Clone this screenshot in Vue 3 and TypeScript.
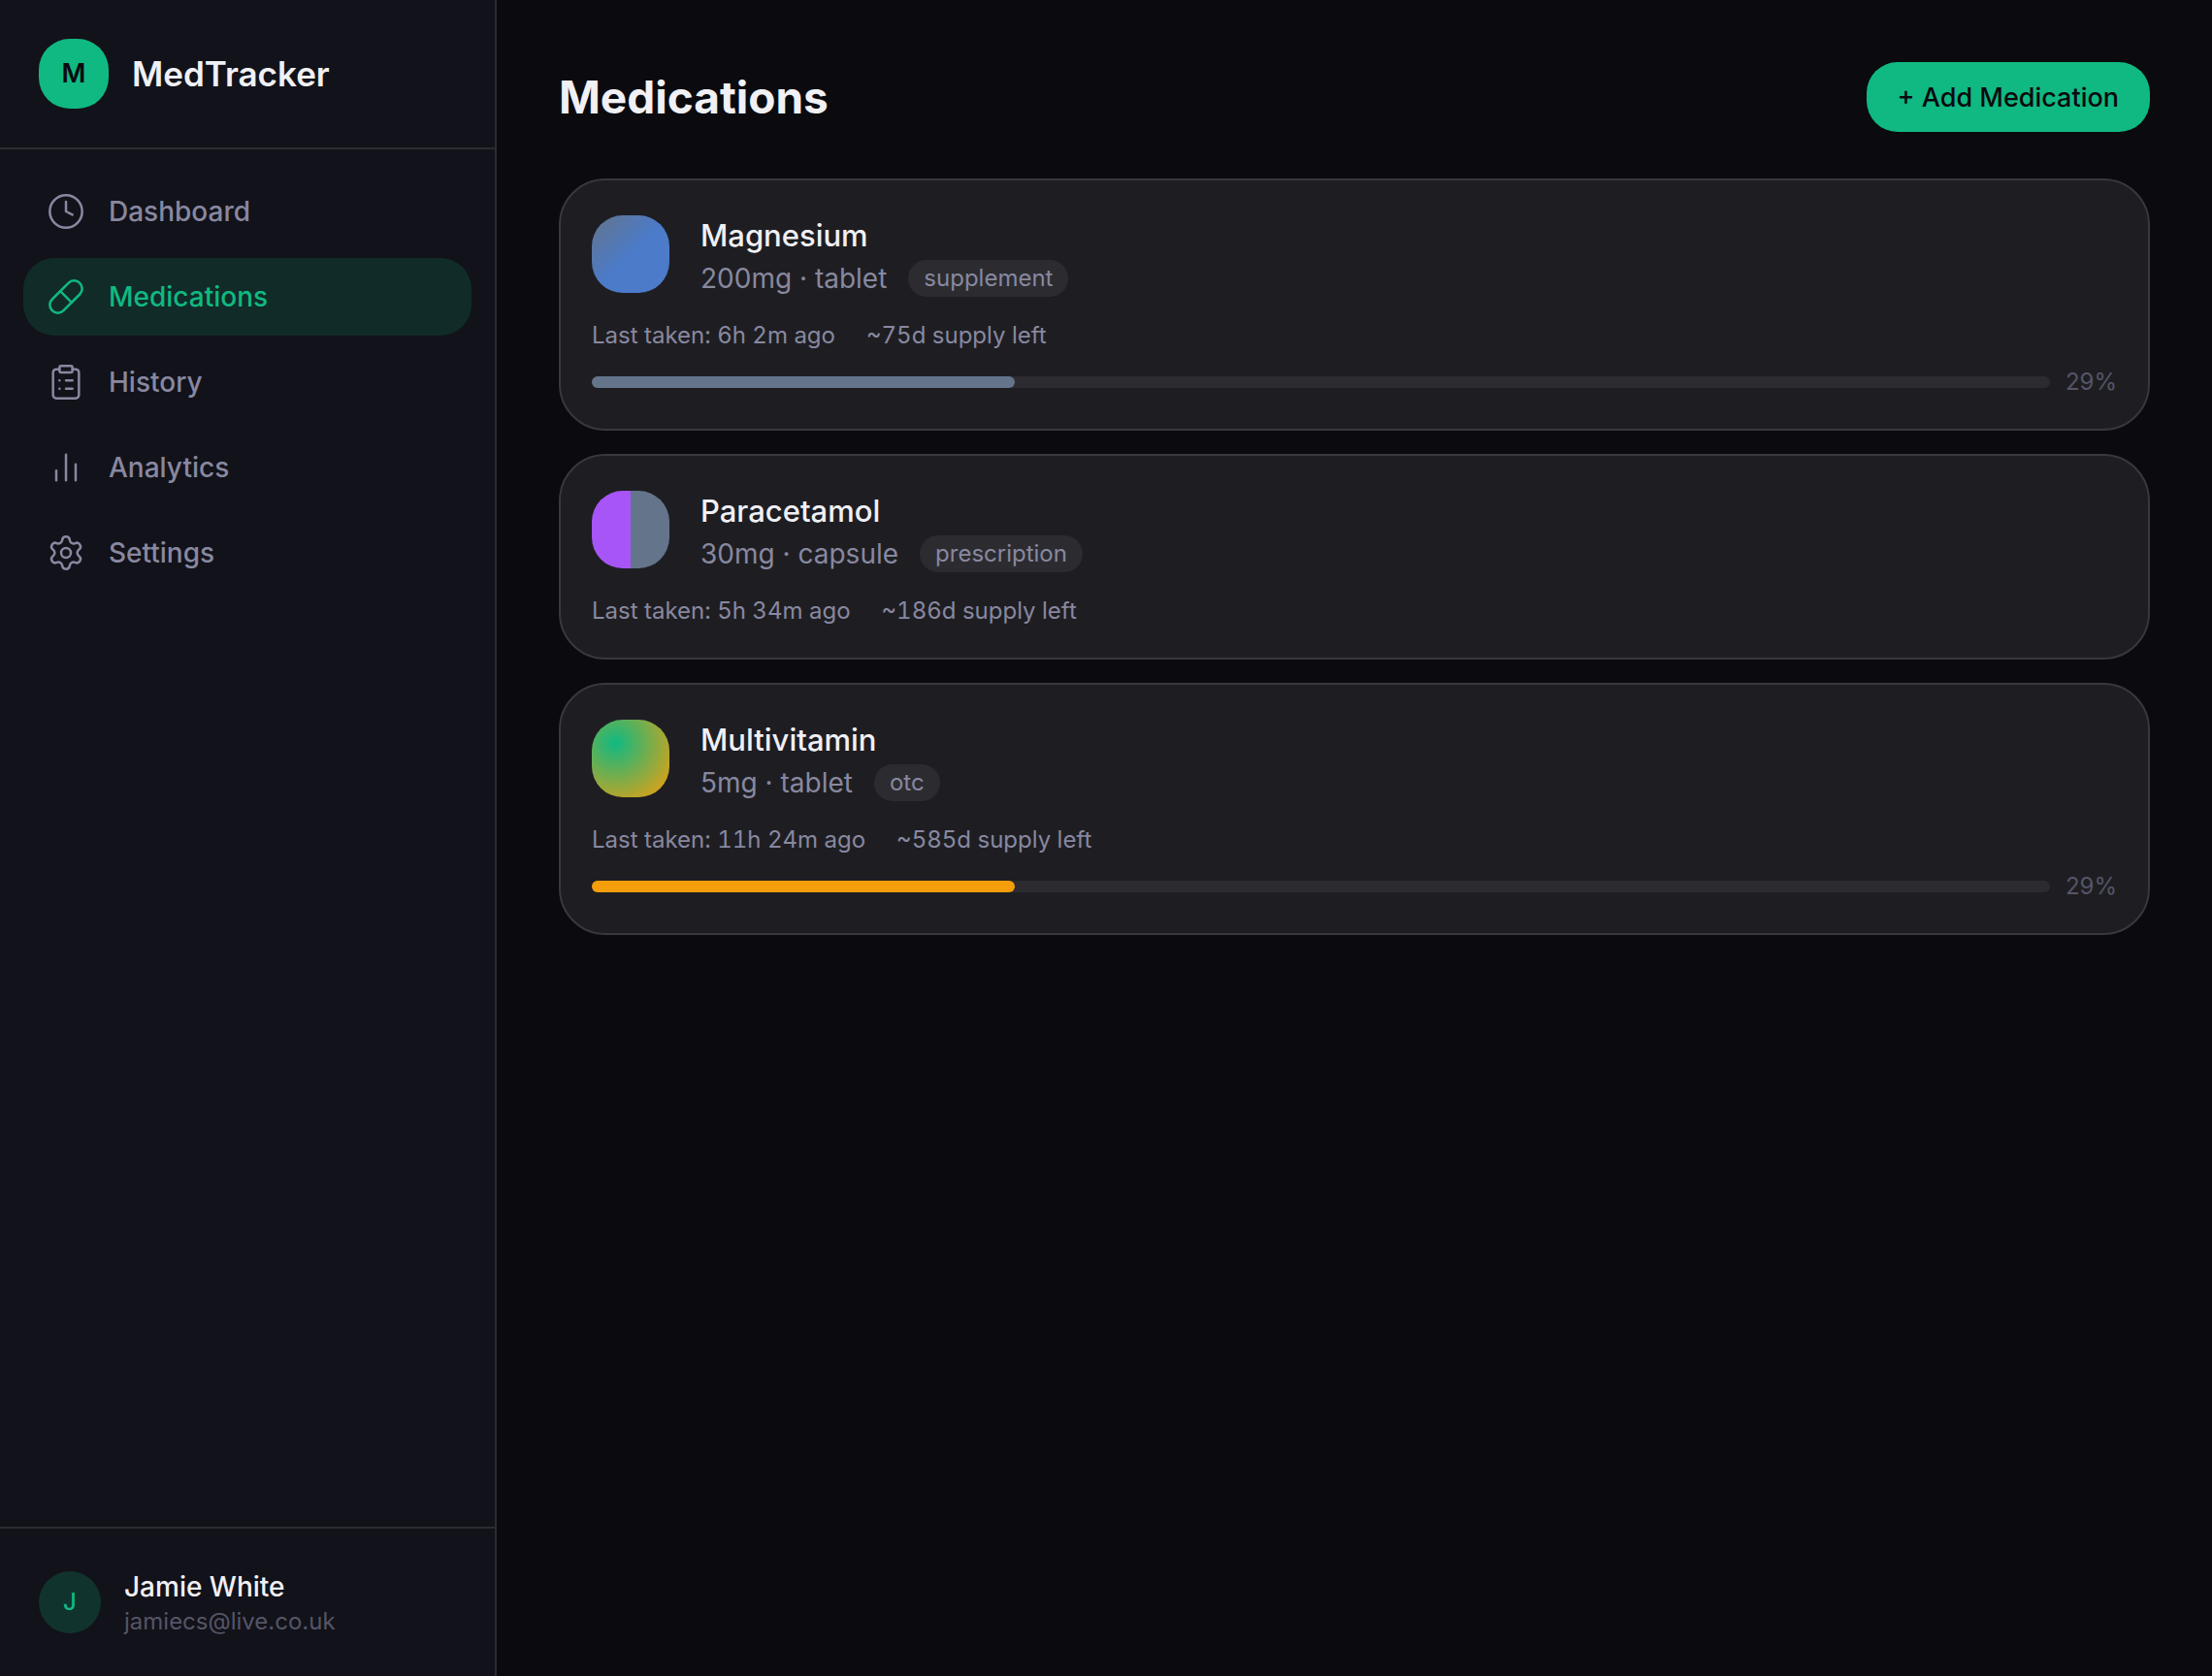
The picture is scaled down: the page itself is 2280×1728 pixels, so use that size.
<script setup lang="ts">
interface NavItem {
  label: string
  paths: string[]
  active?: boolean
}

interface Medication {
  name: string
  dose: string
  category: string
  lastTaken: string
  supply: string
  swatch: string
  progress?: number
  barColor?: string
}

const navItems: NavItem[] = [
  { label: 'Dashboard', paths: ['M12 2a10 10 0 1 0 0 20a10 10 0 1 0 0-20', 'M12 6v6l4 2'] },
  {
    label: 'Medications',
    active: true,
    paths: ['m10.5 20.5 10-10a4.95 4.95 0 1 0-7-7l-10 10a4.95 4.95 0 1 0 7 7Z', 'm8.5 8.5 7 7'],
  },
  {
    label: 'History',
    paths: [
      'M9 2h6a1 1 0 0 1 1 1v2a1 1 0 0 1-1 1H9a1 1 0 0 1-1-1V3a1 1 0 0 1 1-1Z',
      'M16 4h2a2 2 0 0 1 2 2v14a2 2 0 0 1-2 2H6a2 2 0 0 1-2-2V6a2 2 0 0 1 2-2h2',
      'M12 11h4M12 16h4M8 11h.01M8 16h.01',
    ],
  },
  { label: 'Analytics', paths: ['M18 20V10M12 20V4M6 20v-6'] },
  {
    label: 'Settings',
    paths: [
      'M9.671 4.136a2.34 2.34 0 0 1 4.659 0 2.34 2.34 0 0 0 3.319 1.915 2.34 2.34 0 0 1 2.33 4.033 2.34 2.34 0 0 0 0 3.831 2.34 2.34 0 0 1-2.33 4.033 2.34 2.34 0 0 0-3.319 1.915 2.34 2.34 0 0 1-4.659 0 2.34 2.34 0 0 0-3.32-1.915 2.34 2.34 0 0 1-2.33-4.033 2.34 2.34 0 0 0 0-3.831A2.34 2.34 0 0 1 6.35 6.051a2.34 2.34 0 0 0 3.319-1.915',
      'M12 9a3 3 0 1 0 0 6a3 3 0 1 0 0-6',
    ],
  },
]

const medications: Medication[] = [
  {
    name: 'Magnesium',
    dose: '200mg · tablet',
    category: 'supplement',
    lastTaken: 'Last taken: 6h 2m ago',
    supply: '~75d supply left',
    swatch: 'linear-gradient(135deg, #64748b, #4b7bc9 50%)',
    progress: 29,
    barColor: '#64748b',
  },
  {
    name: 'Paracetamol',
    dose: '30mg · capsule',
    category: 'prescription',
    lastTaken: 'Last taken: 5h 34m ago',
    supply: '~186d supply left',
    swatch: 'linear-gradient(90deg, #a855f7 50%, #64748b 50%)',
  },
  {
    name: 'Multivitamin',
    dose: '5mg · tablet',
    category: 'otc',
    lastTaken: 'Last taken: 11h 24m ago',
    supply: '~585d supply left',
    swatch: 'radial-gradient(circle at 30% 30%, #10b981, #f59e0b)',
    progress: 29,
    barColor: '#f59e0b',
  },
]
</script>

<template>
  <div class="app">
    <aside class="sidebar">
      <div class="brand">
        <span class="logo">M</span>
        <span class="brand-name">MedTracker</span>
      </div>
      <nav class="nav">
        <a
          v-for="item in navItems"
          :key="item.label"
          href="#"
          class="nav-item"
          :class="{ active: item.active }"
        >
          <svg class="nav-icon" viewBox="0 0 24 24" aria-hidden="true">
            <path v-for="d in item.paths" :key="d" :d="d" />
          </svg>
          <span>{{ item.label }}</span>
        </a>
      </nav>
      <div class="profile">
        <span class="avatar">J</span>
        <div class="profile-text">
          <span class="profile-name">Jamie White</span>
          <span class="profile-email">jamiecs@live.co.uk</span>
        </div>
      </div>
    </aside>

    <main class="main">
      <header class="page-header">
        <h1 class="title">Medications</h1>
        <button type="button" class="add-button">+ Add Medication</button>
      </header>
      <div class="list">
        <article v-for="med in medications" :key="med.name" class="card">
          <div class="card-top">
            <span class="swatch" :style="{ background: med.swatch }"></span>
            <div class="info">
              <h2 class="med-name">{{ med.name }}</h2>
              <div class="dose-row">
                <span>{{ med.dose }}</span>
                <span class="badge">{{ med.category }}</span>
              </div>
            </div>
          </div>
          <div class="meta">
            <span>{{ med.lastTaken }}</span>
            <span>{{ med.supply }}</span>
          </div>
          <div v-if="med.progress" class="progress-row">
            <div class="track">
              <div class="fill" :style="{ width: med.progress + '%', background: med.barColor }"></div>
            </div>
            <span class="percent">{{ med.progress }}%</span>
          </div>
        </article>
      </div>
    </main>
  </div>
</template>

<style>
body {
  margin: 0;
  background: #0a0a0f;
}
</style>

<style scoped>
.app {
  display: flex;
  min-height: 100vh;
  background: #0a0a0f;
  color: #f0f0f5;
  font-family: Inter, "Liberation Sans", sans-serif;
  font-size: 28px;
  line-height: 40px;
}

.sidebar {
  box-sizing: border-box;
  display: flex;
  flex-direction: column;
  flex: 0 0 512px;
  background: #12121a;
  border-right: 2px solid #2c2c30;
}

.brand {
  display: flex;
  align-items: center;
  gap: 24px;
  padding: 40px;
  border-bottom: 2px solid #2c2c30;
}

.logo {
  display: flex;
  align-items: center;
  justify-content: center;
  width: 72px;
  height: 72px;
  border-radius: 32px;
  background: #10b981;
  color: #0a0a0f;
  font-size: 27px;
  font-weight: 600;
}

.brand-name {
  font-size: 35px;
  font-weight: 600;
}

.nav {
  display: flex;
  flex: 1;
  flex-direction: column;
  gap: 8px;
  padding: 24px;
}

.nav-item {
  display: flex;
  align-items: center;
  gap: 24px;
  padding: 20px 24px;
  border-radius: 32px;
  color: #8888a0;
  font-weight: 500;
  text-decoration: none;
}

.nav-item.active {
  background: rgba(16, 185, 129, 0.15);
  color: #10b981;
}

.nav-icon {
  width: 40px;
  height: 40px;
  fill: none;
  stroke: currentColor;
  stroke-width: 1.5;
  stroke-linecap: round;
  stroke-linejoin: round;
}

.profile {
  display: flex;
  align-items: center;
  gap: 24px;
  padding: 40px;
  border-top: 2px solid #2c2c30;
}

.avatar {
  display: flex;
  align-items: center;
  justify-content: center;
  width: 64px;
  height: 64px;
  border-radius: 50%;
  background: rgba(16, 185, 129, 0.2);
  color: #10b981;
  font-size: 24px;
  font-weight: 500;
}

.profile-text {
  display: flex;
  flex-direction: column;
}

.profile-name {
  font-weight: 500;
}

.profile-email {
  color: #555566;
  font-size: 24px;
  line-height: 32px;
}

.main {
  flex: 1;
  min-width: 0;
  padding: 64px;
}

.page-header {
  display: flex;
  align-items: center;
  justify-content: space-between;
  margin-bottom: 48px;
}

.title {
  margin: 0;
  font-size: 46px;
  font-weight: 700;
  line-height: 72px;
}

.add-button {
  padding: 17px 32px 15px;
  border: 0;
  border-radius: 32px;
  background: #10b981;
  color: #0a0a0f;
  font: inherit;
  font-size: 27px;
  font-weight: 500;
}

.list {
  display: flex;
  flex-direction: column;
  gap: 24px;
}

.card {
  padding: 32px;
  border: 2px solid #38383d;
  border-radius: 48px;
  background: #1e1e22;
}

.card-top {
  display: flex;
  align-items: center;
  gap: 32px;
}

.swatch {
  width: 80px;
  height: 80px;
  border-radius: 32px;
}

.med-name {
  margin: 0;
  font-size: 31px;
  font-weight: 500;
  line-height: 50px;
}

.dose-row {
  display: flex;
  align-items: center;
  gap: 22px;
  height: 38px;
  color: #8888a0;
}

.badge {
  padding: 3px 16px;
  border-radius: 20px;
  background: #2c2c30;
  font-size: 24px;
  line-height: 32px;
}

.meta {
  display: flex;
  gap: 32px;
  margin-top: 24px;
  color: #8888a0;
  font-size: 24px;
  font-variant-numeric: tabular-nums;
  line-height: 32px;
}

.progress-row {
  display: flex;
  align-items: center;
  gap: 16px;
  margin-top: 16px;
}

.track {
  flex: 1;
  height: 12px;
  border-radius: 6px;
  background: #2c2c30;
}

.fill {
  height: 100%;
  border-radius: 6px;
}

.percent {
  color: #555566;
  font-size: 24px;
  line-height: 32px;
}
</style>
